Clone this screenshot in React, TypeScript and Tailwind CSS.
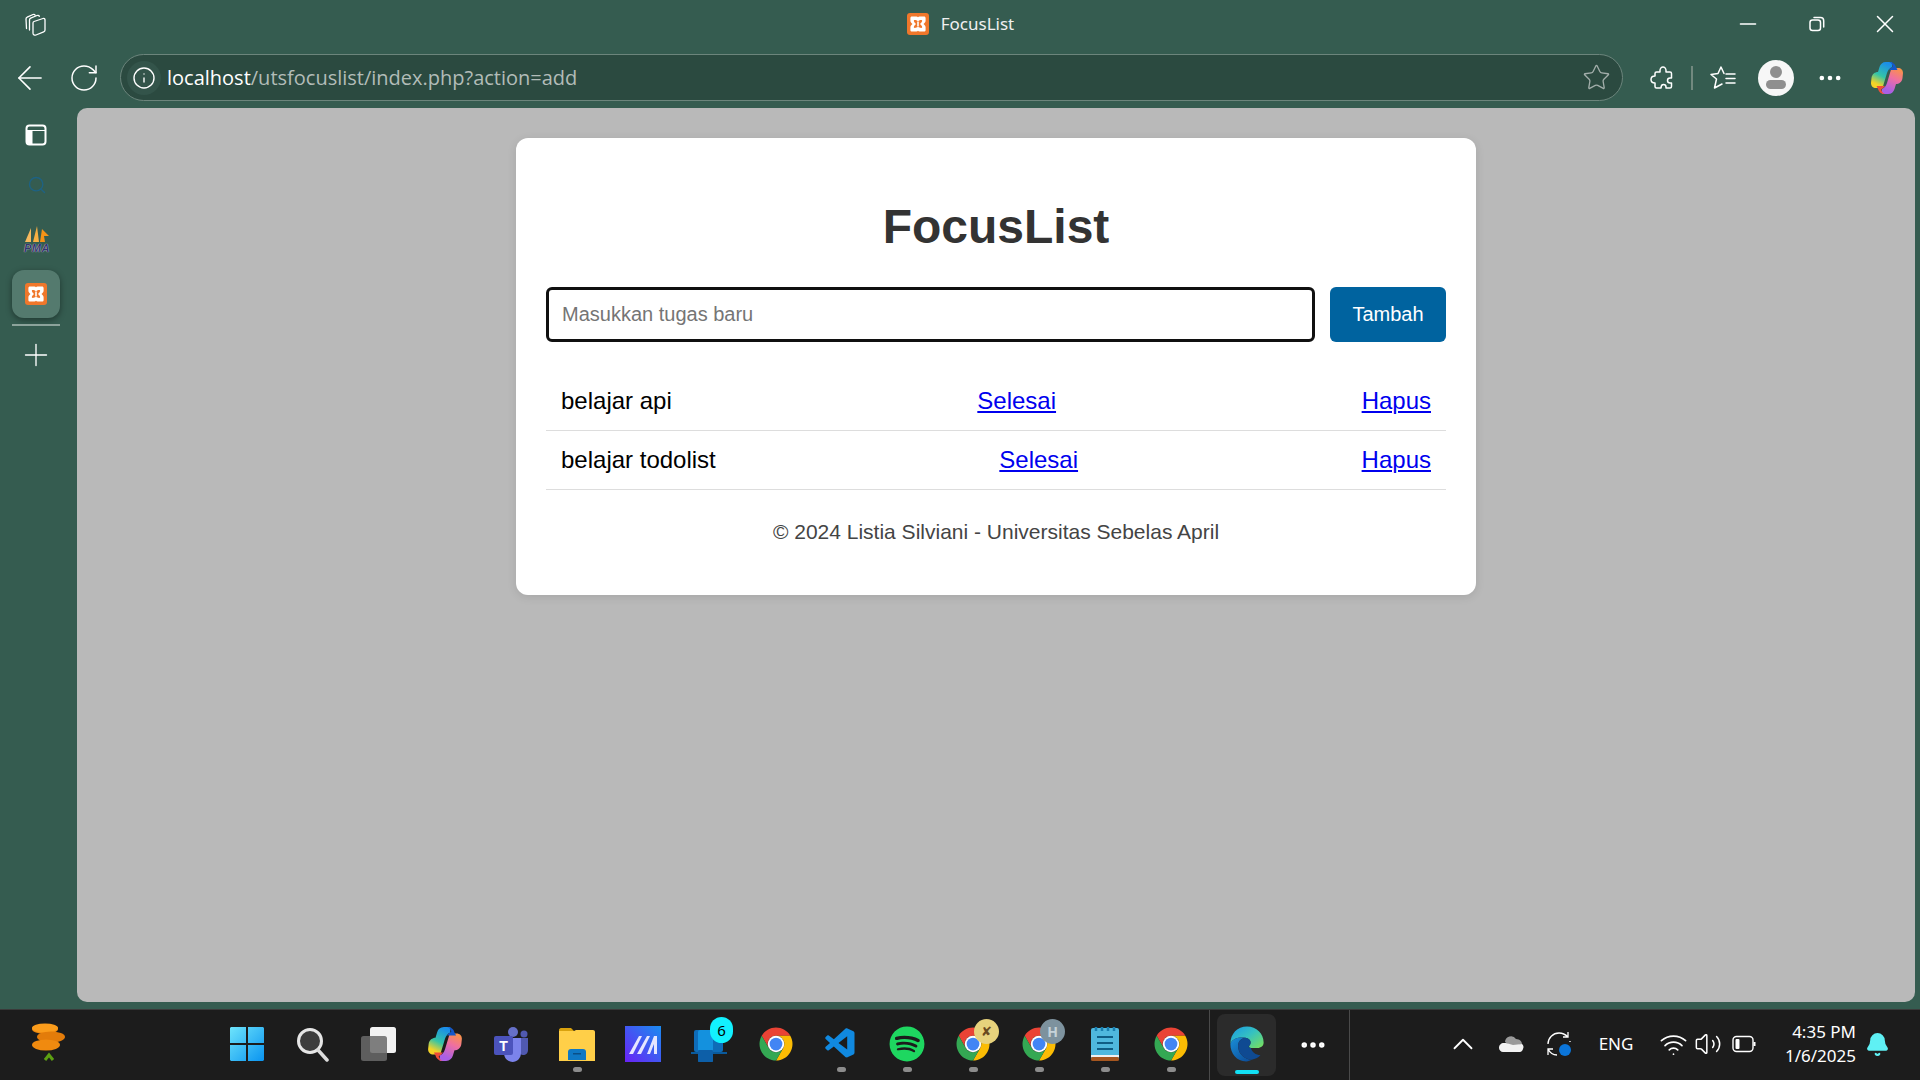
import type { ReactNode } from 'react'
import { ArrowLeft, Bell, ChevronUp, Ellipsis, Info, Minus, Plus, RotateCw, Search, Star, Volume2, Wifi, X } from 'lucide-react'
import { FaSpotify } from 'react-icons/fa'
import { VscVscode } from 'react-icons/vsc'

function XamppIcon({ size = 24 }: { size?: number }) {
  return (
    <svg width={size} height={size} viewBox="0 0 24 24">
      <rect x="1" y="1" width="22" height="22" rx="3" fill="#f0772b" />
      <path
        d="M6 4.500h4.500c.7 0 1.200.3 1.500.8.300-.5.800-.8 1.500-.8H18c1 0 1.600.6 1.600 1.600v2.700c0 1.400-1 2.300-2.100 3.200 1.100.9 2.100 1.800 2.100 3.200v2.700c0 1-.6 1.600-1.600 1.600h-4.500c-.7 0-1.200-.3-1.500-.8-.3.500-.8.800-1.500.8H6c-1 0-1.600-.6-1.600-1.600v-2.700c0-1.400 1-2.300 2.100-3.200-1.100-.9-2.100-1.800-2.100-3.200V6.100c0-1 .6-1.600 1.600-1.600z"
        fill="#fff"
      />
      <path
        d="M8 8.200c1.400-.4 2.600.3 4 1.100 1.400-.8 2.600-1.500 4-1.100.7.900-.6 2.500-2 3.800 1.400 1.300 2.700 2.900 2 3.800-1.400.4-2.600-.3-4-1.100-1.400.8-2.600 1.500-4 1.100-.7-.9.600-2.500 2-3.800-1.400-1.300-2.700-2.900-2-3.800z"
        fill="#f0772b"
      />
      <path d="M12 9.500v5" stroke="#fff" strokeWidth="1.600" />
    </svg>
  )
}

function CopilotIcon({ size = 36, id }: { size?: number; id: string }) {
  return (
    <svg width={size} height={size} viewBox="0 0 36 36">
      <defs>
        <linearGradient id={`${id}a`} x1="0.6" y1="0" x2="0.2" y2="1">
          <stop offset="0" stopColor="#1b8fe8" />
          <stop offset="0.5" stopColor="#33c4a8" />
          <stop offset="0.85" stopColor="#f5d327" />
        </linearGradient>
        <linearGradient id={`${id}b`} x1="0.7" y1="0" x2="0.3" y2="1">
          <stop offset="0.1" stopColor="#a95fe6" />
          <stop offset="0.6" stopColor="#ef6fa0" />
          <stop offset="1" stopColor="#f9924a" />
        </linearGradient>
      </defs>
      <path d="M23 2H17C13.500 2 11.500 4 10.500 7L9 12C6 12 3 14 2.500 18L2 23C2 26 4 28 7 28H13.500L18 13C19 10 20.500 8 23 7Z" fill={`url(#${id}a)`} />
      <path d="M23 2H17C13.500 2 11.500 4 10.500 7L9 12C6 12 3 14 2.500 18L2 23C2 26 4 28 7 28H13.500L18 13C19 10 20.500 8 23 7Z" fill={`url(#${id}b)`} transform="rotate(180 18 18)" />
      <path d="M20 2C24 2 26 4 27 7L28.500 10H20C21.500 8 23 7 24 6.500 23 4 22 2.500 20 2Z" fill="#1558c9" />
      <path d="M16 34C12 34 10 32 9 29L7.500 26H16C14.500 28 13 29 12 29.500 13 32 14 33.500 16 34Z" fill="#ef4d37" />
    </svg>
  )
}

function ChromeIcon({ badge }: { badge?: ReactNode }) {
  return (
    <div className="relative w-[36px] h-[36px]">
      <svg width="36" height="36" viewBox="0 0 48 48">
        <path d="M43.050 13A22 22 0 0 0 4.950 13L14.470 29.500A11 11 0 0 1 24 13Z" fill="#ea4335" />
        <path d="M43.050 13H24A11 11 0 0 1 33.530 29.500L24 46A22 22 0 0 0 43.050 13Z" fill="#fbbc04" />
        <path d="M24 46L33.530 29.500A11 11 0 0 1 14.470 29.500L4.950 13A22 22 0 0 0 24 46Z" fill="#34a853" />
        <circle cx="24" cy="24" r="11" fill="#fff" />
        <circle cx="24" cy="24" r="8.500" fill="#4285f4" />
      </svg>
      {badge}
    </div>
  )
}

function EdgeIcon() {
  return (
    <svg width="38" height="38" viewBox="0 0 48 48">
      <defs>
        <linearGradient id="edgeTop" x1="0.1" y1="0" x2="1" y2="0.8">
          <stop offset="0" stopColor="#1b9de2" />
          <stop offset="0.5" stopColor="#35c1c1" />
          <stop offset="1" stopColor="#6fdc6a" />
        </linearGradient>
        <linearGradient id="edgeLow" x1="0" y1="0" x2="0.8" y2="1">
          <stop offset="0" stopColor="#1a8fd8" />
          <stop offset="1" stopColor="#0c4f9c" />
        </linearGradient>
      </defs>
      <path d="M3 24C3 11 12 2 24 2c12 0 21 9 21 20 0 4-3 7-8 7h-8c-2 0-3-1-2-3 3-3 2-9-5-10C14 15 5 17 3 24z" fill="url(#edgeTop)" />
      <path d="M3 24C5 17 14 15 22 16c-7 1-10 6-9 13 1 8 8 14 17 15-2 1-4 2-7 2C11 46 3 36 3 24z" fill="url(#edgeLow)" />
      <path d="M22 16c7 1 8 7 5 10-2 2 0 3 2 3 1 5 6 9 12 9-3 4-7 5-11 6-9-1-16-7-17-15-1-7 2-12 9-13z" fill="#0f4a92" />
    </svg>
  )
}

function TaskSlot({ children, running }: { children: ReactNode; running?: boolean }) {
  return (
    <div className="relative w-[66px] h-full flex items-center justify-center pb-[2px]">
      {children}
      {running && <span className="absolute bottom-[8px] w-[9px] h-[5px] rounded-full bg-[#8c8c8c]" />}
    </div>
  )
}

function NavSlot({ children }: { children: ReactNode }) {
  return <div className="w-[44px] h-[44px] flex items-center justify-center text-white">{children}</div>
}

function TitleBar() {
  return (
    <div className="h-[54px] pb-[6px] grid grid-cols-[1fr_auto_1fr] items-center text-white">
      <div className="pl-[22px]">
        <svg width="28" height="28" viewBox="0 0 28 28" fill="none" stroke="#fff" strokeWidth="1.300" strokeLinejoin="round" strokeLinecap="round">
          <path d="M12 11.500L21 8.500c1-.3 2 .3 2 1.300V20c0 1-.5 1.600-1.300 1.900L14 25c-1.500.5-3-.3-3-1.800V13c0-.7.3-1.200 1-1.500z" />
          <path d="M7.500 20V10c0-1 .5-1.500 1.200-1.800L15 5.500c1-.3 2 0 2.300.8" />
          <path d="M4.500 18.500L4 9c0-1 .5-1.500 1.200-1.800L11 4.500c1-.3 1.800 0 2.200.7" />
        </svg>
      </div>
      <div className="flex items-center gap-[11px]">
        <XamppIcon />
        <span className="text-[17px] text-[#f0f0f0]">FocusList</span>
      </div>
      <div className="flex justify-end items-center">
        <div className="w-[69px] flex justify-center"><Minus size={26} strokeWidth={1.300} /></div>
        <div className="w-[69px] flex justify-center">
          <svg width="18" height="18" viewBox="0 0 18 18" fill="none" stroke="#fff" strokeWidth="1.500">
            <rect x="2" y="5" width="10.500" height="10.500" rx="2.500" />
            <path d="M6 2.500h6.500c2 0 3.200 1.200 3.200 3.200V12" strokeLinecap="round" />
          </svg>
        </div>
        <div className="w-[69px] pr-[1px] flex justify-center"><X size={30} strokeWidth={1.200} /></div>
      </div>
    </div>
  )
}

function Toolbar() {
  return (
    <div className="h-[54px] pb-[7px] flex items-center pl-[3px] pr-[11px]">
      <div className="w-[54px] flex justify-center text-white"><ArrowLeft size={38} strokeWidth={1} /></div>
      <div className="w-[54px] flex justify-center text-white"><RotateCw size={32} strokeWidth={1.100} /></div>
      <div className="ml-[9px] flex-1 h-[47px] rounded-full bg-[#2b4a40] border border-[#6c857c] flex items-center pl-[6px] pr-[11px]">
        <div className="w-[34px] h-[34px] rounded-full bg-[#33544a] flex items-center justify-center text-white">
          <Info size={24} strokeWidth={1.400} />
        </div>
        <div className="ml-[6px] flex-1 text-[20px] text-[#b2bcb8] font-['Open_Sans',sans-serif]">
          <span className="text-white">localhost</span>/utsfocuslist/index.php?action=add
        </div>
        <Star size={29} strokeWidth={1.100} className="text-[#a2aeaa]" />
      </div>
      <div className="ml-[17px] flex items-center">
        <NavSlot>
          <svg width="28" height="28" viewBox="0 0 28 28" fill="none" stroke="#fff" strokeWidth="1.500" strokeLinejoin="round">
            <path d="M12 6.500C12 4.500 13.500 3 15 3s3 1.500 3 3.500V8h4c1 0 1.500.6 1.500 1.500V14h-1.500c-1.500 0-2.500 1-2.500 2.500s1 2.500 2.500 2.500h1.500v3.500c0 1-.5 1.500-1.500 1.500h-4V23c0-1.500-1-2.500-2.500-2.500S13 22 13 24H8.500C7.500 24 7 23.500 7 22.500V19c-2.500 0-4-1.500-4-3.500S4.500 12 7 12V9.500C7 8.500 7.500 8 8.500 8H12z" />
          </svg>
        </NavSlot>
        <div className="mx-[7px] w-[2px] h-[24px] bg-[#72897f]" />
        <NavSlot>
          <svg width="28" height="28" viewBox="0 0 28 28" fill="none" stroke="#fff" strokeWidth="1.500" strokeLinejoin="round" strokeLinecap="round">
            <path d="M16 9.500L13 3 10 9.500 3 10.500 8.500 15 6.500 24 14 20" />
            <path d="M18 10H27M18 14.500H27M18 19H27" />
          </svg>
        </NavSlot>
        <div className="ml-[10px] w-[44px] flex justify-center">
          <div className="w-[36px] h-[36px] rounded-full bg-[#f7f7f7] flex flex-col items-center justify-center gap-[2px]">
            <div className="w-[12px] h-[12px] rounded-full bg-[#8f8f8f]" />
            <div className="w-[20px] h-[9px] rounded-[5px] bg-[#8f8f8f]" />
          </div>
        </div>
        <div className="ml-[10px] w-[44px] flex justify-center text-white"><Ellipsis size={28} strokeWidth={2} /></div>
        <div className="ml-[13px] w-[44px] flex justify-center"><CopilotIcon id="cp1" /></div>
      </div>
    </div>
  )
}

function Sidebar() {
  return (
    <aside className="w-[77px] shrink-0 flex flex-col">
      <div className="w-[71px] h-[54px] flex items-center justify-center">
        <svg width="24" height="24" viewBox="0 0 24 24">
          <rect x="2.500" y="2.500" width="19" height="19" rx="3" fill="none" stroke="#fff" strokeWidth="2" />
          <path d="M3 7.500h18M3 8h5v13H5c-1 0-2-1-2-2z" fill="#fff" stroke="#fff" strokeWidth="1" />
        </svg>
      </div>
      <div className="w-[74px] h-[46px] flex items-center justify-center text-[#1e6283]">
        <Search size={20} strokeWidth={1.700} />
      </div>
      <div className="w-[74px] h-[62px] flex flex-col items-center justify-center gap-[1px]">
        <svg width="24" height="16" viewBox="0 0 24 16">
          <path d="M0 16L6 2V16Z" fill="#f7b95e" />
          <path d="M8 16L12 0L14 16Z" fill="#f7b042" />
          <path d="M15 16L17 3L24 10L19 10L20 16Z" fill="#f59317" />
        </svg>
        <span className="text-[11px] leading-[10px] font-bold italic tracking-[0.5px] text-[#35356e] [text-shadow:0_0_1px_#ffffff] font-['Liberation_Sans',sans-serif]">PMA</span>
      </div>
      <div className="ml-[12px] w-[48px] h-[48px] rounded-[12px] bg-[#547a6e] shadow-[0_2px_6px_rgba(0,0,0,0.4)] flex items-center justify-center">
        <XamppIcon />
      </div>
      <div className="ml-[12px] mt-[6px] w-[48px] h-[2px] bg-[#8ca39b]" />
      <div className="w-[71px] h-[58px] flex items-center justify-center text-white">
        <Plus size={36} strokeWidth={0.900} />
      </div>
    </aside>
  )
}

const tasks = [
  { name: 'belajar api' },
  { name: 'belajar todolist' },
]

function TaskCard() {
  return (
    <div className="mx-auto w-[960px] bg-white rounded-[12px] shadow-[0_2px_10px_rgba(0,0,0,0.1)] px-[30px] pt-[61px] pb-[51px] font-['Liberation_Sans',sans-serif]">
      <h1 className="text-center text-[48px] leading-[55px] font-bold text-[#333333] mb-[33px]">FocusList</h1>
      <form className="flex gap-[15px] mb-[30px]">
        <input
          type="text"
          placeholder="Masukkan tugas baru"
          className="flex-1 h-[55px] px-[13px] text-[20px] rounded-[6px] border-[3px] border-[#101010] outline-none placeholder:text-[#757575]"
        />
        <button type="button" className="w-[116px] h-[55px] pb-[2px] rounded-[6px] bg-[#00639f] text-white text-[20px]">Tambah</button>
      </form>
      <ul>
        {tasks.map((task) => (
          <li key={task.name} className="flex justify-between px-[15px] py-[15px] text-[24px] leading-[28px] text-black border-b border-[#dddddd]">
            <span>{task.name}</span>
            <a href="#" className="text-[#0000ee] underline">Selesai</a>
            <a href="#" className="text-[#0000ee] underline">Hapus</a>
          </li>
        ))}
      </ul>
      <p className="mt-[30px] text-center text-[21px] leading-[24px] text-[#444444]">© 2024 Listia Silviani - Universitas Sebelas April</p>
    </div>
  )
}

function Taskbar() {
  return (
    <footer className="h-[71px] shrink-0 bg-[#1c1c1c] border-t border-[#3a3a3a] flex items-stretch pl-[15px] pr-[22px] text-white">
      <TaskSlot>
        <svg width="38" height="44" viewBox="0 0 38 44">
          <ellipse cx="16" cy="7" rx="13" ry="5" fill="#f08a0f" />
          <ellipse cx="16" cy="6" rx="13" ry="4.500" fill="#fa9c1b" />
          <ellipse cx="22" cy="15" rx="14" ry="5.500" fill="#e37c0a" />
          <ellipse cx="17" cy="23" rx="14" ry="5.500" fill="#f08a0f" />
          <path d="M16 38l4-5 4 5" fill="none" stroke="#5da012" strokeWidth="3" />
        </svg>
      </TaskSlot>
      <div className="w-[133px]" />
      <TaskSlot>
        <svg width="36" height="36" viewBox="0 0 36 36">
          <defs>
            <linearGradient id="win" x1="0" y1="0" x2="1" y2="1">
              <stop offset="0" stopColor="#6ee4fb" />
              <stop offset="1" stopColor="#0a94f0" />
            </linearGradient>
          </defs>
          <path d="M1 2.500C1 1.500 1.800 1 2.500 1H17v16H1zM19 1h14.500c.8 0 1.500.6 1.500 1.500V17H19zM1 19h16v16H2.500C1.800 35 1 34.400 1 33.500zM19 19h16v14.500c0 .9-.7 1.500-1.500 1.500H19z" fill="url(#win)" />
        </svg>
      </TaskSlot>
      <TaskSlot>
        <svg width="36" height="36" viewBox="0 0 36 36">
          <circle cx="15" cy="15" r="11.500" fill="#3d3d3d" stroke="#e6e6e6" strokeWidth="3" />
          <path d="M23 24l9 10" stroke="#dcdcdc" strokeWidth="3.500" strokeLinecap="round" />
        </svg>
      </TaskSlot>
      <TaskSlot>
        <svg width="38" height="36" viewBox="0 0 38 36">
          <rect x="10" y="1" width="26" height="26" rx="2.500" fill="#f2f2f2" />
          <rect x="1" y="10" width="26" height="25" rx="2.500" fill="#6a6a6a" fillOpacity="0.85" />
        </svg>
      </TaskSlot>
      <TaskSlot><CopilotIcon id="cp2" size={38} /></TaskSlot>
      <TaskSlot>
        <svg width="36" height="36" viewBox="0 0 36 36">
          <circle cx="20" cy="6" r="5" fill="#6670c8" />
          <circle cx="31" cy="8" r="3.500" fill="#5059b0" />
          <path d="M26 12h9v12c0 3-2 5-5 5-2 0-4-2-4-4z" fill="#5059b0" />
          <path d="M11 12h17v15c0 5-4 9-8.500 9S11 32 11 27z" fill="#7b83eb" />
          <rect x="1" y="10" width="19" height="19" rx="2" fill="#4b53bc" />
          <text x="10.500" y="25" fontSize="14" fontWeight="700" fill="#fff" textAnchor="middle" fontFamily="Liberation Sans, sans-serif">T</text>
        </svg>
      </TaskSlot>
      <TaskSlot running>
        <svg width="36" height="36" viewBox="0 0 36 36">
          <path d="M0 4c0-1 .8-2 2-2h10l4 4H0z" fill="#d9a20e" />
          <path d="M0 5h15l2-1h17c1 0 2 .8 2 2v29H0z" fill="#ffcf48" />
          <path d="M9 34V26c0-2 1-3 3-3h12c2 0 3 1 3 3v8z" fill="#0f78c4" />
          <rect x="14" y="27" width="8" height="1.500" fill="#0a4f86" />
        </svg>
      </TaskSlot>
      <TaskSlot>
        <svg width="36" height="36" viewBox="0 0 36 36">
          <defs>
            <linearGradient id="ma" x1="0" y1="1" x2="1" y2="0">
              <stop offset="0" stopColor="#6a22f5" />
              <stop offset="1" stopColor="#1a8cf0" />
            </linearGradient>
          </defs>
          <rect width="36" height="36" fill="url(#ma)" />
          <path d="M4 28L14 10h3L8 28zM12 28L22 10h3L16 28zM22 28l7-18h3v18h-3v-10l-4 10z" fill="#e6e6ff" />
        </svg>
      </TaskSlot>
      <TaskSlot>
        <div className="relative w-[36px] h-[36px]">
          <svg width="36" height="36" viewBox="0 0 36 36">
            <rect x="3" y="4" width="29" height="22" rx="2" fill="#0e6cb8" />
            <path d="M0 26h36v2H0z" fill="#0a5a9c" />
            <rect x="7" y="4" width="15" height="32" rx="2" fill="#1491de" />
            <rect x="7" y="24" width="15" height="12" rx="1" fill="#0d5fa8" />
          </svg>
          <span className="absolute -top-[9px] -right-[6px] w-[23px] h-[26px] rounded-full bg-[#12f1ff] text-black text-[15px] leading-[26px] text-center">6</span>
        </div>
      </TaskSlot>
      <TaskSlot><div className="ml-[1px]"><ChromeIcon /></div></TaskSlot>
      <TaskSlot running><VscVscode size={36} className="text-[#1089e0]" /></TaskSlot>
      <TaskSlot running><FaSpotify size={36} className="text-[#1ed760]" /></TaskSlot>
      <TaskSlot running>
        <ChromeIcon badge={<span className="absolute -top-[7px] -right-[8px] w-[25px] h-[25px] rounded-full bg-[#e7d27c] text-center text-[13px] leading-[25px] text-[#6a4a1f]">✘</span>} />
      </TaskSlot>
      <TaskSlot running>
        <ChromeIcon badge={<span className="absolute -top-[7px] -right-[8px] w-[25px] h-[25px] rounded-full bg-[#7d929e] text-center text-[14px] leading-[25px] font-bold text-[#c6d2d9]">H</span>} />
      </TaskSlot>
      <TaskSlot running>
        <svg width="30" height="36" viewBox="0 0 30 36">
          <rect x="1" y="2" width="28" height="32" rx="2" fill="#4fb8de" />
          <rect x="1" y="31" width="28" height="4" rx="1.500" fill="#a5561f" />
          <rect x="1" y="29" width="28" height="2" fill="#f1f1f1" />
          <path d="M6 1v4M12 1v4M18 1v4M24 1v4" stroke="#1a7fb0" strokeWidth="2.500" />
          <path d="M7 11h16M7 17h16M7 23h16" stroke="#0f5d85" strokeWidth="2" />
        </svg>
      </TaskSlot>
      <TaskSlot running><ChromeIcon /></TaskSlot>
      <div className="ml-[5px] w-[1px] bg-[#4a4a4a]" />
      <div className="ml-[7px] my-[4px] relative w-[59px] rounded-[8px] bg-[#2b2b2b] flex items-center justify-center pb-[2px]">
        <EdgeIcon />
        <span className="absolute bottom-[2px] w-[24px] h-[4px] rounded-full bg-[#12e0f5]" />
      </div>
      <div className="w-[73px] flex items-center justify-center"><Ellipsis size={30} strokeWidth={2.400} /></div>
      <div className="w-[1px] bg-[#4a4a4a]" />
      <div className="flex-1 flex justify-end items-center pb-[2px]">
        <div className="w-[48px] flex justify-center"><ChevronUp size={34} strokeWidth={1.300} /></div>
        <div className="w-[48px] flex justify-center">
          <svg width="26" height="18" viewBox="0 0 26 18">
            <path d="M7 7a6 6 0 0 1 11-3c4 0 6 3 6 5L14 12z" fill="#9a9a9a" />
            <path d="M1 13c0-3 2-5 5-5h2l7 2 9-1c1.500 1 2 3 1 5-.5 2-2 3-3 3H5c-2 0-4-2-4-4z" fill="#f2f2f2" />
          </svg>
        </div>
        <div className="w-[48px] flex justify-center">
          <svg width="26" height="26" viewBox="0 0 26 26" fill="none" stroke="#fff" strokeWidth="1.300">
            <path d="M2 13C2 7 7 2 13 2c3 0 6 1 9 4M22 1v5h-5M24 10v1M2 18c2 4 5 6 9 6M2 24v-6h5" />
            <circle cx="19" cy="19" r="6" fill="#0b75d9" stroke="none" />
          </svg>
        </div>
        <div className="w-[66px] text-center text-[17px]">ENG</div>
        <div className="ml-[6px] w-[36px] flex justify-center"><Wifi size={29} strokeWidth={1.400} /></div>
        <div className="w-[34px] flex justify-center"><Volume2 size={28} strokeWidth={1.300} /></div>
        <div className="w-[38px] flex justify-center">
          <svg width="24" height="18" viewBox="0 0 24 18" fill="none" stroke="#fff" strokeWidth="1.400">
            <rect x="1" y="1.500" width="20" height="15" rx="3.500" />
            <rect x="3.500" y="4" width="4" height="10" rx="1" fill="#fff" stroke="none" />
            <path d="M22.500 7v4" strokeWidth="2" />
          </svg>
        </div>
        <div className="w-[93px] text-right text-[17px] leading-[24px]">
          <div>4:35 PM</div>
          <div>1/6/2025</div>
        </div>
        <div className="w-[42px] flex justify-center"><Bell size={25} fill="#5ff0f4" stroke="#5ff0f4" /></div>
      </div>
    </footer>
  )
}

export default function App() {
  return (
    <div className="h-screen flex flex-col bg-[#355c50] font-['Noto_Sans',sans-serif] overflow-hidden">
      <TitleBar />
      <Toolbar />
      <div className="flex-1 min-h-0 flex pb-[7px] pr-[5px]">
        <Sidebar />
        <main className="flex-1 rounded-[10px] bg-[#b9b9b9] pt-[30px]">
          <TaskCard />
        </main>
      </div>
      <Taskbar />
    </div>
  )
}
